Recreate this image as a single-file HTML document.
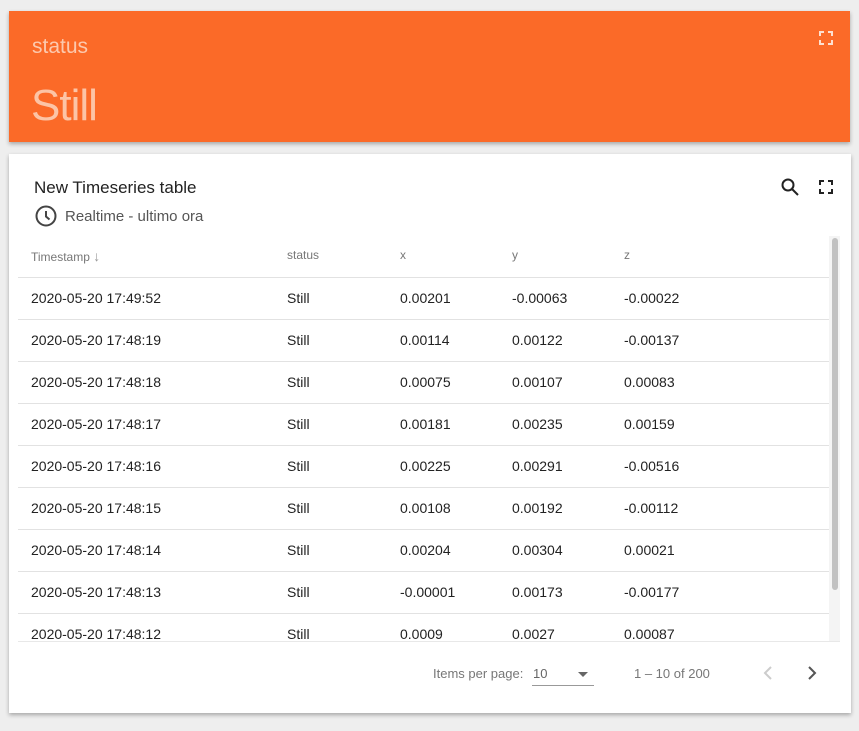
<!DOCTYPE html>
<html><head><style>
body{margin:0;width:859px;height:731px;background:#eeeeee;font-family:"Liberation Sans",sans-serif;position:relative;overflow:hidden}
.o{position:absolute;left:9px;top:11px;width:841px;height:131px;background:#fb6a28;box-shadow:0 2px 4px rgba(0,0,0,.3)}
.o .l{position:absolute;left:23px;top:24px;font-size:21px;color:#fcc9ae;font-weight:300}
.o .v{position:absolute;left:22px;top:70px;font-size:44px;color:#fcc4a6;font-weight:100;letter-spacing:-1px}
.w{position:absolute;left:9px;top:154px;width:842px;height:559px;background:#fff;box-shadow:0 2px 4px rgba(0,0,0,.3)}
.t{position:absolute;left:25px;top:24px;font-size:17px;color:#222}
.s{position:absolute;left:56px;top:54px;font-size:15px;color:#555}
.tb{position:absolute;left:9px;top:81px;width:811px;height:406px;overflow:hidden}
.r{position:absolute;left:0;width:811px;height:42px;border-bottom:1px solid #e2e2e2;font-size:14px;color:#222}
.r span{position:absolute;top:13px}
.h{font-size:12px;color:#777}
.sb{position:absolute;left:820px;top:82px;width:11px;height:405px;background:#f4f4f4}
.sb div{position:absolute;left:3px;top:2px;width:6px;height:352px;background:#c1c1c1;border-radius:3px}
.p{position:absolute;top:512px;font-size:13px;color:#777}
</style></head><body>
<div class="o"><div class="l">status</div><div class="v">Still</div>
<svg style="position:absolute;left:810px;top:20px" width="14" height="14" viewBox="0 0 14 14" fill="none" stroke="#fde0d0" stroke-width="2"><path d="M1 5V1h4M9 1h4v4M13 9v4H9M5 13H1V9"/></svg></div>
<div class="w">
<div class="t">New Timeseries table</div>
<svg style="position:absolute;left:26px;top:51px" width="22" height="22" viewBox="0 0 22 22" fill="none" stroke="#444" stroke-width="2"><circle cx="11" cy="11" r="9.5"/><path d="M11 6v5.5l3.5 3"/></svg>
<div class="s">Realtime - ultimo ora</div>
<svg style="position:absolute;left:772px;top:24px" width="18" height="18" viewBox="0 0 18 18" fill="none" stroke="#222" stroke-width="2"><circle cx="7" cy="7" r="5.5"/><path d="M11 11l6 6"/></svg>
<svg style="position:absolute;left:810px;top:26px" width="14" height="14" viewBox="0 0 14 14" fill="none" stroke="#222" stroke-width="2"><path d="M1 5V1h4M9 1h4v4M13 9v4H9M5 13H1V9"/></svg>
<div class="tb">
<div class="r h" style="top:0"><span style="left:13px;top:13px">Timestamp <span style="position:static;color:#999;font-size:14px">↓</span></span><span style="left:269px">status</span><span style="left:382px">x</span><span style="left:494px">y</span><span style="left:606px">z</span></div>
<div class="r" style="top:42px"><span style="left:13px">2020-05-20 17:49:52</span><span style="left:269px">Still</span><span style="left:382px">0.00201</span><span style="left:494px">-0.00063</span><span style="left:606px">-0.00022</span></div>
<div class="r" style="top:84px"><span style="left:13px">2020-05-20 17:48:19</span><span style="left:269px">Still</span><span style="left:382px">0.00114</span><span style="left:494px">0.00122</span><span style="left:606px">-0.00137</span></div>
<div class="r" style="top:126px"><span style="left:13px">2020-05-20 17:48:18</span><span style="left:269px">Still</span><span style="left:382px">0.00075</span><span style="left:494px">0.00107</span><span style="left:606px">0.00083</span></div>
<div class="r" style="top:168px"><span style="left:13px">2020-05-20 17:48:17</span><span style="left:269px">Still</span><span style="left:382px">0.00181</span><span style="left:494px">0.00235</span><span style="left:606px">0.00159</span></div>
<div class="r" style="top:210px"><span style="left:13px">2020-05-20 17:48:16</span><span style="left:269px">Still</span><span style="left:382px">0.00225</span><span style="left:494px">0.00291</span><span style="left:606px">-0.00516</span></div>
<div class="r" style="top:252px"><span style="left:13px">2020-05-20 17:48:15</span><span style="left:269px">Still</span><span style="left:382px">0.00108</span><span style="left:494px">0.00192</span><span style="left:606px">-0.00112</span></div>
<div class="r" style="top:294px"><span style="left:13px">2020-05-20 17:48:14</span><span style="left:269px">Still</span><span style="left:382px">0.00204</span><span style="left:494px">0.00304</span><span style="left:606px">0.00021</span></div>
<div class="r" style="top:336px"><span style="left:13px">2020-05-20 17:48:13</span><span style="left:269px">Still</span><span style="left:382px">-0.00001</span><span style="left:494px">0.00173</span><span style="left:606px">-0.00177</span></div>
<div class="r" style="top:378px"><span style="left:13px">2020-05-20 17:48:12</span><span style="left:269px">Still</span><span style="left:382px">0.0009</span><span style="left:494px">0.0027</span><span style="left:606px">0.00087</span></div>
</div>
<div style="position:absolute;left:9px;top:487px;width:822px;border-top:1px solid #e8e8e8"></div>
<div class="sb"><div></div></div>
<div class="p" style="left:424px">Items per page:</div>
<div class="p" style="left:524px;color:#666">10</div>
<div style="position:absolute;left:523px;top:531px;width:62px;border-top:1px solid #999"></div>
<div style="position:absolute;left:569px;top:518px;border:5px solid transparent;border-top:5px solid #666"></div>
<div class="p" style="left:625px">1 – 10 of 200</div>
<svg style="position:absolute;left:752px;top:511px" width="14" height="16" viewBox="0 0 14 16" fill="none" stroke="#ccc" stroke-width="2"><path d="M10 2L4 8l6 6"/></svg>
<svg style="position:absolute;left:796px;top:511px" width="14" height="16" viewBox="0 0 14 16" fill="none" stroke="#555" stroke-width="2"><path d="M4 2l6 6-6 6"/></svg>
</div>
</body></html>
